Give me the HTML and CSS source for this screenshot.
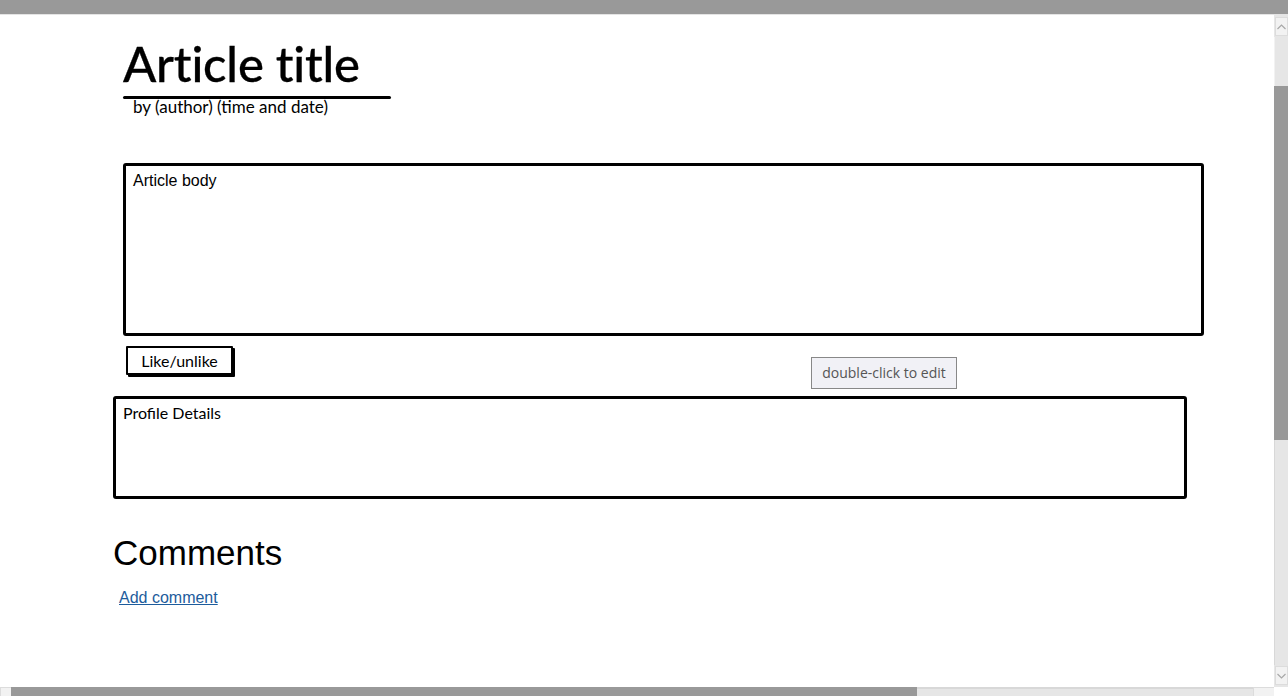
FILE: index.html
```html
<!DOCTYPE html>
<html>
<head>
<meta charset="utf-8">
<title>Article</title>
<link rel="stylesheet" href="styles.css">
</head>
<body>
<div class="topbar"></div>
<div class="frame">
  <div class="content">
    <header class="article-head">
      <h1 class="title">Article title</h1>
      <div class="rule"></div>
      <div class="byline">by (author) (time and date)</div>
    </header>
    <div class="body-box">Article body</div>
    <div class="like-row">
      <button class="like">Like/unlike</button>
    </div>
    <div class="profile-box">Profile Details</div>
    <h2 class="comments">Comments</h2>
    <a class="add" href="#">Add comment</a>
    <div class="tooltip">double-click to edit</div>
  </div>
  <div class="vscroll">
    <div class="arrow up"><svg width="9" height="6" viewBox="0 0 9 6"><path d="M0.5 5 L4.5 1 L8.5 5" fill="none" stroke="#a8a8a8" stroke-width="1.2"/></svg></div>
    <div class="track t1"></div>
    <div class="thumb"></div>
    <div class="track t2"></div>
    <div class="arrow down"><svg width="9" height="6" viewBox="0 0 9 6"><path d="M0.5 1 L4.5 5 L8.5 1" fill="none" stroke="#a8a8a8" stroke-width="1.2"/></svg></div>
  </div>
</div>
<div class="hscroll">
  <div class="harrow left"></div>
  <div class="hthumb"></div>
  <div class="htrack"></div>
  <div class="harrow right"></div>
  <div class="corner"></div>
</div>
</body>
</html>
```
FILE: styles.css
```css
html, body {
  margin: 0;
  padding: 0;
  height: 696px;
  overflow: hidden;
  background: #fff;
}
body {
  display: flex;
  flex-direction: column;
  font-family: "Lato", "Liberation Sans", sans-serif;
  color: #000;
}
.topbar {
  height: 14px;
  background: #999;
  border-bottom: 1px solid #e4e4e4;
  flex: none;
}
.frame {
  flex: 1;
  display: flex;
  min-height: 0;
}
.content {
  flex: 1;
  position: relative;
  padding-left: 113px;
  padding-right: 70px;
}
.article-head {
  margin-left: 10px;
  width: 268px;
  padding-top: 18px;
}
.title {
  margin: 0;
  font-family: "Lato", sans-serif;
  font-weight: 500;
  font-size: 49px;
  line-height: 60px;
  letter-spacing: -0.2px;
  -webkit-text-stroke: 0.3px #000;
}
.rule {
  height: 3px;
  background: #000;
  border-radius: 2px;
  margin-top: 3px;
}
.byline {
  margin-left: 10px;
  font-size: 17px;
  line-height: 18px;
  margin-top: -1px;
}
.body-box {
  margin-top: 47px;
  margin-left: 10px;
  height: 155px;
  border: 3px solid #000;
  border-radius: 3px;
  padding: 6px 7px;
  font-family: "Liberation Sans", sans-serif;
  font-size: 16px;
  line-height: 18px;
}
.like-row {
  margin-top: 10px;
  margin-left: 13px;
  height: 50px;
}
.like {
  display: block;
  font-family: "Lato", sans-serif;
  font-size: 16px;
  background: #fff;
  color: #000;
  border: 2px solid #000;
  box-shadow: 2px 2px 0 #000;
  padding: 0;
  height: 29px;
  width: 107px;
  border-radius: 1px;
}
.profile-box {
  margin-right: 17px;
  height: 87px;
  border: 3px solid #000;
  border-radius: 3px;
  padding: 5px 7px;
  font-family: "Lato", sans-serif;
  font-size: 16px;
  line-height: 18px;
}
.comments {
  margin: 34px 0 0 0;
  font-family: "Liberation Sans", sans-serif;
  font-weight: 400;
  font-size: 35px;
  line-height: 40px;
}
.add {
  display: inline-block;
  margin-top: 16px;
  margin-left: 6px;
  font-family: "Liberation Sans", sans-serif;
  font-size: 16px;
  color: #1d5c9c;
  text-decoration: underline;
}
.tooltip {
  position: absolute;
  left: 811px;
  top: 342px;
  box-sizing: border-box;
  width: 146px;
  height: 32px;
  background: #f1f1f6;
  border: 1px solid #888;
  color: #555;
  font-family: "Open Sans", sans-serif;
  font-size: 14px;
  line-height: 30px;
  text-align: center;
}
.vscroll {
  width: 14px;
  flex: none;
  display: flex;
  flex-direction: column;
  background: #e6e6e6;
}
.arrow {
  height: 19px;
  margin: 2px 0 1px 1px;
  background: #f2f2f2;
  border: 1px solid #dcdcdc;
  box-sizing: border-box;
  display: flex;
  align-items: center;
  justify-content: center;
}
.track.t1 { height: 49px; border-left: 1px solid #f2f2f2; }
.thumb { height: 354px; background: #999; }
.track.t2 { flex: 1; border-left: 1px solid #d8d8d8; }
.arrow.down { margin: 1px 0 2px 1px; }
.hscroll {
  height: 9px;
  flex: none;
  display: flex;
  background: #e6e6e6;
}
.harrow {
  background: #f2f2f2;
  border-left: 1px solid #dcdcdc;
  border-top: 1px solid #dcdcdc;
}
.harrow.left { width: 10px; }
.hthumb { width: 906px; background: #999; }
.htrack { flex: 1; border-top: 2px solid #d8d8d8; }
.harrow.right { width: 20px; }
.corner { width: 14px; background: #fff; }
```
